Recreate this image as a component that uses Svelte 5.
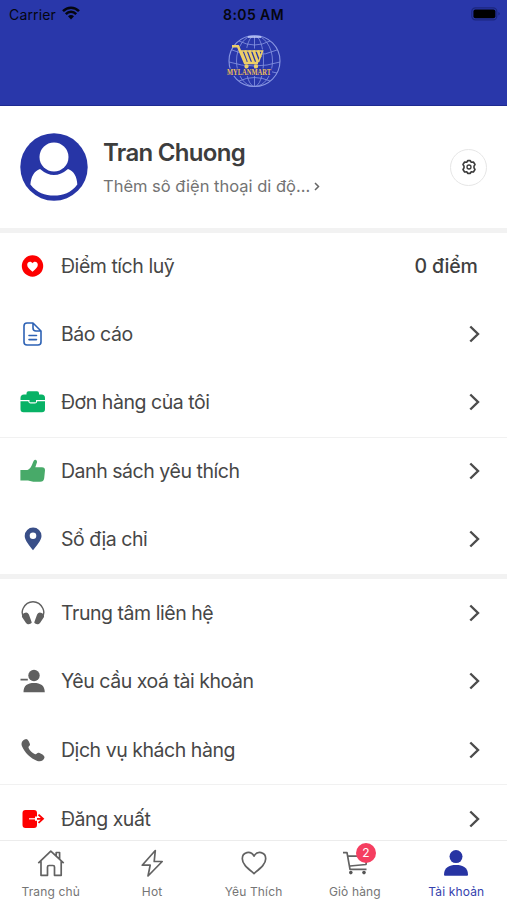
<script>
  const sections = [
    [
      { icon: 'heart', label: 'Điểm tích luỹ', value: '0 điểm' },
      { icon: 'doc', label: 'Báo cáo' },
      { icon: 'case', label: 'Đơn hàng của tôi' },
      { icon: 'thumb', label: 'Danh sách yêu thích', line: true },
      { icon: 'pin', label: 'Sổ địa chỉ' }
    ],
    [
      { icon: 'headphones', label: 'Trung tâm liên hệ' },
      { icon: 'remove', label: 'Yêu cầu xoá tài khoản' },
      { icon: 'phone', label: 'Dịch vụ khách hàng' },
      { icon: 'logout', label: 'Đăng xuất', line: true }
    ]
  ];
  const tabs = [
    { icon: 'home', label: 'Trang chủ' },
    { icon: 'bolt', label: 'Hot' },
    { icon: 'like', label: 'Yêu Thích' },
    { icon: 'cart', label: 'Giỏ hàng', badge: 2 },
    { icon: 'user', label: 'Tài khoản', active: true }
  ];
</script>

<div class="screen">
  <header>
    <div class="status">
      <div class="carrier">
        <span>Carrier</span>
        <svg width="18" height="14" viewBox="0 0 18 14" fill="none" stroke="#05060f" stroke-width="2.5">
          <path d="M1 5.2C5.6.6 12.4.6 17 5.2M3.8 8.1c3-3 7.4-3 10.4 0" />
          <path d="M6 10.3c1.7-1.6 4.3-1.6 6 0L9 13.4z" fill="#05060f" stroke="none" />
        </svg>
      </div>
      <span class="time">8:05 AM</span>
      <svg class="battery" width="30" height="14" viewBox="0 0 30 14">
        <rect x=".8" y=".8" width="25" height="12" rx="3.6" fill="none" stroke="#1c277f" stroke-width="1.2" />
        <rect x="2.4" y="2.4" width="22" height="8.8" rx="2" fill="#000" />
        <path d="M27.4 5v3.6q1.4-.5 1.4-1.8T27.4 5" fill="#1c277f" />
      </svg>
    </div>
    <svg class="logo" width="58" height="56" viewBox="0 0 58 56">
      <g fill="none" stroke="#8997e2" stroke-width=".8">
        <circle cx="29.5" cy="28" r="25.5" stroke-width="1.1" />
        <ellipse cx="29.5" cy="28" rx="9" ry="25.5" />
        <ellipse cx="29.5" cy="28" rx="18" ry="25.5" />
        <path d="M29.5 2.5v51M14 8q15.500 8 31 0M7 17q22 10 45 0M4 29q25 8 51 0M7 40q22-7 45 0M14 48q15.500-7 31 0" />
        <path d="M23 4h13" stroke="#c6cff8" stroke-width="1.5" />
      </g>
      <path d="M13 14l25 2.500-5 15H18z" fill="#2937aa" />
      <rect x="2" y="35.500" width="45" height="7.500" fill="#2937aa" />
      <g fill="none" stroke="#edcf68">
        <path d="M7 13.200h6L20 30h13" stroke-width="2.500" />
        <path d="M16 18l4.500 11M20 17.500l4.500 12M24.200 17.500l4.500 12M28.500 17.500l4.400 12M32.800 17.500l2.600 7" stroke-width="2.700" />
        <path d="M15 18h22.500l-4 11" stroke-width="1.500" />
      </g>
      <circle cx="21.500" cy="33.400" r="2.100" fill="#edcf68" />
      <circle cx="31" cy="33.400" r="2.100" fill="#edcf68" />
      <text x="2" y="42.300" textLength="44" lengthAdjust="spacingAndGlyphs">MYLANMART</text>
    </svg>
  </header>

  <section class="profile">
    <svg width="68" height="68" viewBox="0 0 68 68">
      <circle cx="34" cy="34" r="33.700" fill="#2735a6" />
      <circle cx="34" cy="24" r="14.500" fill="#fff" />
      <path d="M20 36q14 12 28 0c6 2 9 8 9.300 15.500C51 60 43 62.500 34 62.500S17 60 10.400 51.500C11 44 14 38 20 36z" fill="#fff" />
    </svg>
    <div class="who">
      <h1>Tran Chuong</h1>
      <p>Thêm sô điện thoại di độ...<svg width="6" height="9" viewBox="0 0 6 9"><path d="M1 1l3.500 3.500L1 8" fill="none" stroke="#666" stroke-width="1.500" /></svg></p>
    </div>
    <button class="gear" aria-label="settings">
      <svg width="16" height="16" viewBox="0 0 16 16" fill="none" stroke="#3a3a3a" stroke-width="1.600" stroke-linejoin="round">
        <path d="M5.900 3.200 6.700 1.600h2.600l.800 1.600 2.300-.200 1.600 2.500-1 1.600v1.800l1 1.600-1.600 2.500-2.300-.200-.800 1.600H6.700l-.800-1.600-2.300.200L2 10.500l1-1.600V7.100L2 5.500 3.600 3z" />
        <circle cx="8" cy="8" r="2" stroke-width="1.300" />
      </svg>
    </button>
  </section>

  {#each sections as rows}
    <section class="group">
      {#each rows as row}
        <div class="row" class:line={row.line}>
          <svg class="icon" width="26" height="26" viewBox="0 0 26 26">
            {#if row.icon === 'heart'}
              <circle cx="12.500" cy="13" r="10.700" fill="#fd0000" />
              <path d="M12.500 18.800C9 16 7.200 14.200 7.200 11.800c0-3.200 3.800-4.200 5.300-1.500 1.500-2.700 5.300-1.700 5.300 1.500 0 2.400-1.800 4.200-5.300 7z" fill="#fff" />
            {:else if row.icon === 'doc'}
              <g fill="none" stroke="#2d62b5" stroke-width="1.600" stroke-linecap="round" stroke-linejoin="round">
                <path d="M13 2H7Q4 2 4 5v16q0 3 3 3h11q3 0 3-3V10zM13 2v5q0 3 3 3h5M9 14.500h7.500M9 18.600h7.500" />
              </g>
            {:else if row.icon === 'case'}
              <path d="M6.500 5.500V4.200Q6.500 2.200 8.500 2.200h8.500q2 0 2 2v1.300h2.500q3.500 0 3.500 3.500v2H.500V9Q.500 5.500 4 5.500zM.500 12.200h7.700q.500 2.300 2.300 2.300H15q1.800 0 2.300-2.300H25v8q0 3-3 3H3.500q-3 0-3-3z" fill="#08b266" />
              <path d="M9.500 10.500h6.500v2.800H9.500z" fill="#08b266" />
            {:else if row.icon === 'thumb'}
              <path d="M.400 12h7.100C11.500 10 12 6 13.600 2.900 15 .900 17.300 2 17 4.300L15.300 9.300H22q3 0 3 3l-.800 8q-.500 3.500-4 3.500h-7L8 22.500H.400z" fill="#48aa69" />
            {:else if row.icon === 'pin'}
              <path d="M13 24.200C10 20 4.700 14.500 4.700 9.900a8.400 8.400 0 0 1 16.800 0C21.500 14.500 16 20 13 24.200z" fill="#394f88" />
              <circle cx="13" cy="9.800" r="3.300" fill="#fff" />
            {:else if row.icon === 'headphones'}
              <path d="M4 17.500C1.800 14.500 1.800 11 3.200 8.200 7.500-.500 18.500-.500 22.800 8.200c1.400 2.800 1.400 6.300-.800 9.300" fill="none" stroke="#606060" stroke-width="1.400" />
              <path d="M4.300 13c2-1.200 3.500-.500 4.600 1.500l2.900 8c-1.500 2.200-4.400 2.200-5.800.400L2 17c-.300-2 .500-3.300 2.300-4zM21.700 13c-2-1.200-3.500-.500-4.600 1.500l-2.900 8c1.500 2.200 4.400 2.200 5.800.400L24 17c.300-2-.500-3.300-2.300-4z" fill="#606060" />
            {:else if row.icon === 'remove'}
              <g fill="#606060">
                <circle cx="14" cy="7.500" r="5.700" />
                <path d="M3.500 24.200C3.500 17.500 7.500 15 14 15s10.800 2.500 10.800 9.200zM.500 10.800h7.300v1.700H.500z" />
              </g>
            {:else if row.icon === 'phone'}
              <path d="M5.600 2.200c2.100-.7 3.900 3.300 4.400 5.100.400 1.500-2 2-1.500 3.400 1.100 2.800 3.500 5.100 6.600 6.500 1.600.500 1.900-1.900 3.700-1.500 2 .500 6 2.900 5.700 4.700-.6 3-3.700 4.700-7.200 3.500C10.500 21.500 4.500 15.500 2 9.300.500 5.500 2.900 2.800 5.600 2.200z" fill="#606060" />
            {:else}
              <path d="M5.500 4H14q3 0 3 3v3.500h-2v4.200h2V19q0 3-3 3H5.500q-3 0-3-3V7q0-3 3-3z" fill="#fd0000" />
              <path d="M9 12.800h8" stroke="#fff" stroke-width="1.200" />
              <path d="M17 12.800h6M18.500 8.700l4.500 4.100-4.500 4.100" fill="none" stroke="#fd0000" stroke-width="1.800" />
            {/if}
          </svg>
          <span class="label">{row.label}</span>
          {#if row.value}
            <span class="value">{row.value}</span>
          {:else}
            <svg class="chevron" width="11" height="18" viewBox="0 0 11 18"><path d="M1.300 1.500 9 9l-7.700 7.500" fill="none" stroke="#4c4c4c" stroke-width="2.400" /></svg>
          {/if}
        </div>
      {/each}
    </section>
  {/each}

  <nav>
    {#each tabs as tab}
      <div class="tab" class:active={tab.active}>
        <div class="glyph">
          <svg width="30" height="30" viewBox="0 0 30 30" fill="none" stroke="#626262" stroke-width="1.700" stroke-linejoin="round">
            {#if tab.icon === 'home'}
              <path d="M2.300 15.200 14.800 3.200 27.700 15.200M5 13.200V27.300h6.500V19q0-1.500 1.500-1.500h4q1.500 0 1.500 1.500v8.300h6.700V13.200M20.200 8V4.500h3.400v7" />
            {:else if tab.icon === 'bolt'}
              <path d="M18.300 2.500 5.200 17.200h8L11 28 25.200 13.500h-8z" />
            {:else if tab.icon === 'like'}
              <path d="M15 25.500C9 20.500 3.300 16.500 3.300 10.800 3.300 4 11.500 2 15 8.200c3.500-6.200 11.700-4.200 11.700 2.600C26.700 16.500 21 20.500 15 25.500z" />
            {:else if tab.icon === 'cart'}
              <path d="M3 4.700h4L10 21.300h16.500M8 8.200h19l-1 8.300-16 1.500" />
              <circle cx="10.800" cy="24.600" r="1.800" fill="#555" stroke="none" />
              <circle cx="24" cy="24.600" r="1.800" fill="#555" stroke="none" />
            {:else}
              <g fill="#2734a3" stroke="none">
                <circle cx="15" cy="8.600" r="6.500" />
                <path d="M3 26.800C3 19.500 8 17 15 17s12 2.500 12 9.800q0 1-1 1H4q-1 0-1-1z" />
              </g>
            {/if}
          </svg>
          {#if tab.badge}<span class="badge">{tab.badge}</span>{/if}
        </div>
        <span class="name">{tab.label}</span>
      </div>
    {/each}
  </nav>
</div>

<style>
  :global(body) { margin: 0; overflow: hidden; }
  .screen {
    width: 507px;
    height: 900px;
    display: flex;
    flex-direction: column;
    overflow: hidden;
    background: #fff;
    color: #444;
    font-family: Inter, "Noto Sans", sans-serif;
    position: relative;
  }
  header {
    height: 106px;
    flex: none;
    background: #2937aa;
    border-bottom: 1px solid #1e2a91;
    box-sizing: border-box;
  }
  .status {
    display: grid;
    grid-template-columns: 1fr auto 1fr;
    align-items: center;
    height: 28px;
    padding: 0 6px 0 9px;
    color: #05060f;
    font-size: 14px;
  }
  .carrier { display: flex; align-items: center; gap: 6px; letter-spacing: .15px; }
  .carrier svg { margin-top: -2px; }
  .time { font-weight: 600; letter-spacing: .4px; margin-left: -3px; }
  .battery { justify-self: end; margin-top: -1px; }
  .logo { display: block; margin: 5px 0 0 225px; }
  .logo text { font: 700 7.500px "Liberation Serif", serif; fill: #efbd58; }
  .profile {
    height: 127px;
    flex: none;
    box-sizing: border-box;
    border-bottom: 5px solid #f2f2f2;
    display: flex;
    align-items: center;
    padding: 0 20px;
  }
  .who { margin-left: 15px; flex: 1; padding-top: 1px; }
  h1 { margin: 0; font-size: 24px; line-height: 33px; font-weight: 600; letter-spacing: -.7px; color: #3d3d3d; }
  p { margin: 3px 0 0; font-size: 16.500px; line-height: 28px; color: #737373; white-space: nowrap; }
  p svg { margin-left: 4px; vertical-align: 1px; }
  .gear {
    width: 37px;
    height: 37px;
    padding: 0;
    display: grid;
    place-items: center;
    background: #fff;
    border: 1.500px solid #e6e6e6;
    border-radius: 50%;
  }
  .group { flex: none; background: #fff; }
  .group + .group { border-top: 5px solid #f2f2f2; }
  .row {
    height: 68.500px;
    box-sizing: border-box;
    display: flex;
    align-items: center;
    padding: 0 27px 0 20px;
  }
  .group:not(.group + .group) .row:first-child { height: 66.500px; }
  .line { border-top: 1px solid #f1f1f1; }
  .label { margin-left: 15px; flex: 1; font-size: 19.500px; letter-spacing: -.46px; color: #474747; white-space: nowrap; }
  .value { font-size: 19.500px; letter-spacing: -.2px; font-weight: 500; color: #3f3f3f; margin-right: 2.500px; }
  nav {
    position: absolute;
    inset: 840px 0 0;
    display: flex;
    background: #fff;
    border-top: 1px solid #ececec;
  }
  .tab { flex: 1; display: flex; flex-direction: column; align-items: center; }
  .glyph { position: relative; height: 30px; margin-top: 7px; }
  .name { font-size: 12px; line-height: 16px; margin-top: 6px; color: #757575; white-space: nowrap; letter-spacing: .15px; }
  .active .name { color: #3541ae; }
  .badge {
    position: absolute;
    left: 16px;
    top: -5px;
    width: 20px;
    height: 20px;
    border-radius: 50%;
    background: #f53e60;
    color: #fff;
    font-size: 12px;
    line-height: 20px;
    text-align: center;
  }
</style>
